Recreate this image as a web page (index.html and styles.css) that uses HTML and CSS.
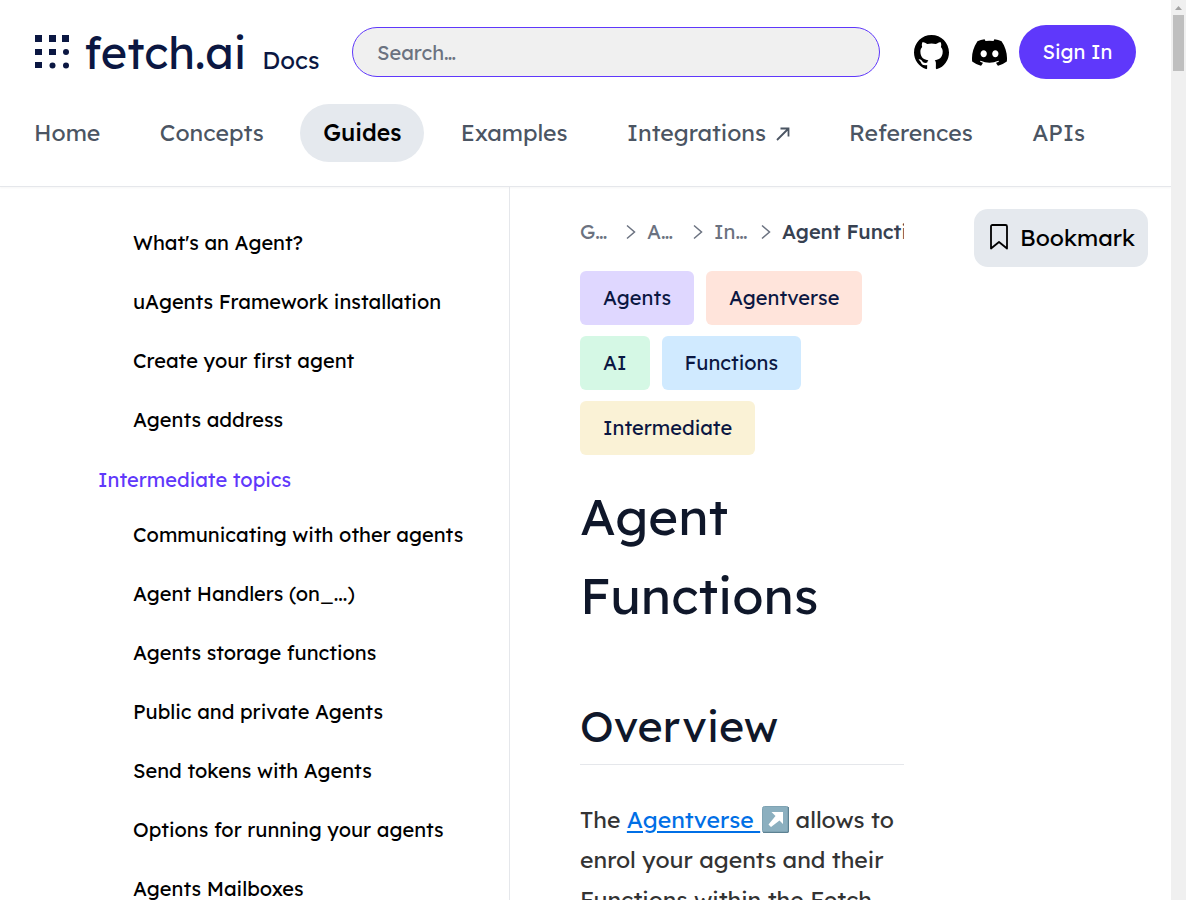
FILE: index.html
```html
<!DOCTYPE html>
<html lang="en">
<head>
<meta charset="utf-8">
<title>Agent Functions – Fetch.ai Docs</title>
<link rel="stylesheet" href="styles.css">
</head>
<body>
<div class="window">
  <div class="page">
    <header class="header">
      <div class="topbar">
        <a class="brand" href="#">
          <svg class="brand-mark" viewBox="0 0 34 34" width="34" height="34" fill="#0b1742" aria-hidden="true">
            <path d="M0 0h7v7H0zM14 0h7v7h-7zM27 0h7v7h-7zM0 14h7v6H0zM14 14h7v6h-7zM0 27h7v6H0z"/>
            <circle cx="31" cy="17" r="3"/><circle cx="17.500" cy="30.500" r="3"/><circle cx="31" cy="30.500" r="3"/>
          </svg>
          <span class="brand-name">fetch.ai</span>
          <span class="brand-sub">Docs</span>
        </a>
        <input class="search" type="search" placeholder="Search…" aria-label="Search">
        <div class="actions">
          <a class="social" href="#" aria-label="GitHub">
            <svg viewBox="0 0 16 16" width="35" height="35"><path d="M8 0C3.580 0 0 3.580 0 8c0 3.540 2.290 6.530 5.470 7.590.4.070.55-.17.55-.38 0-.19-.01-.82-.01-1.490-2.010.37-2.530-.49-2.690-.94-.09-.23-.48-.94-.82-1.130-.28-.15-.68-.52-.01-.53.63-.01 1.080.58 1.230.82.72 1.210 1.870.87 2.330.66.07-.52.28-.87.51-1.070-1.780-.2-3.640-.89-3.640-3.950 0-.87.31-1.590.82-2.150-.08-.2-.36-1.020.08-2.120 0 0 .67-.21 2.200.82.64-.18 1.320-.27 2-.27s1.360.09 2 .27c1.530-1.040 2.200-.82 2.200-.82.44 1.100.16 1.920.08 2.120.51.56.82 1.270.82 2.150 0 3.070-1.870 3.750-3.650 3.950.29.25.54.73.54 1.480 0 1.070-.01 1.930-.01 2.200 0 .21.15.46.55.38A8.010 8.010 0 0 0 16 8c0-4.420-3.580-8-8-8z"/></svg>
          </a>
          <a class="social" href="#" aria-label="Discord">
            <svg viewBox="0 0 24 24" width="35" height="35"><path d="M20.317 4.370a19.800 19.800 0 0 0-4.885-1.515.07.07 0 0 0-.079.037c-.21.375-.444.864-.608 1.250a18.300 18.300 0 0 0-5.487 0 12.600 12.600 0 0 0-.617-1.250.08.08 0 0 0-.079-.037A19.700 19.700 0 0 0 3.677 4.370a.07.07 0 0 0-.032.027C.533 9.046-.32 13.580.099 18.058a.08.08 0 0 0 .031.056 19.900 19.900 0 0 0 5.993 3.030.08.08 0 0 0 .084-.028c.462-.63.874-1.295 1.226-1.994a.076.076 0 0 0-.041-.106 13.100 13.100 0 0 1-1.872-.892.077.077 0 0 1-.008-.128c.126-.094.252-.192.372-.291a.07.07 0 0 1 .077-.01c3.928 1.793 8.180 1.793 12.062 0a.07.07 0 0 1 .078.009c.12.099.246.198.373.292a.077.077 0 0 1-.006.127 12.300 12.300 0 0 1-1.873.892.077.077 0 0 0-.041.107c.36.698.772 1.362 1.225 1.993a.076.076 0 0 0 .084.028 19.800 19.800 0 0 0 6.002-3.030.077.077 0 0 0 .032-.054c.5-5.177-.838-9.674-3.549-13.660a.06.06 0 0 0-.031-.03zM8.020 15.330c-1.183 0-2.157-1.085-2.157-2.419 0-1.333.955-2.419 2.157-2.419 1.210 0 2.176 1.095 2.157 2.420 0 1.333-.955 2.418-2.157 2.418zm7.975 0c-1.183 0-2.157-1.085-2.157-2.419 0-1.333.955-2.419 2.157-2.419 1.210 0 2.176 1.095 2.157 2.420 0 1.333-.946 2.418-2.157 2.418z"/></svg>
          </a>
          <button class="signin" type="button">Sign In</button>
        </div>
      </div>
      <nav class="nav" aria-label="Main">
        <a href="#">Home</a>
        <a href="#">Concepts</a>
        <a class="active" href="#" aria-current="page">Guides</a>
        <a href="#">Examples</a>
        <a href="#">Integrations
          <svg viewBox="0 0 14 14" width="14" height="14" fill="none" stroke="currentColor" stroke-width="1.800" aria-hidden="true"><path d="M1 13 12.500 1.500M4.500 1.500h8v8"/></svg></a>
        <a href="#">References</a>
        <a href="#">APIs</a>
      </nav>
    </header>
    <div class="body">
      <aside class="sidebar">
        <a href="#">What's an Agent?</a>
        <a href="#">uAgents Framework installation</a>
        <a href="#">Create your first agent</a>
        <a href="#">Agents address</a>
        <a class="section" href="#">Intermediate topics</a>
        <a href="#">Communicating with other agents</a>
        <a href="#">Agent Handlers (on_...)</a>
        <a href="#">Agents storage functions</a>
        <a href="#">Public and private Agents</a>
        <a href="#">Send tokens with Agents</a>
        <a href="#">Options for running your agents</a>
        <a href="#">Agents Mailboxes</a>
      </aside>
      <main class="content">
        <div class="crumbs">
          <a href="#">G…</a>
          <svg viewBox="0 0 10 16" width="10" height="16" aria-hidden="true"><path d="M1 1.500 8.500 8 1 14.500"/></svg>
          <a href="#">A…</a>
          <svg viewBox="0 0 10 16" width="10" height="16" aria-hidden="true"><path d="M1 1.500 8.500 8 1 14.500"/></svg>
          <a class="wide" href="#">In…</a>
          <svg viewBox="0 0 10 16" width="10" height="16" aria-hidden="true"><path d="M1 1.500 8.500 8 1 14.500"/></svg>
          <span class="current">Agent Functions</span>
        </div>
        <div class="tags">
          <span class="tag purple">Agents</span>
          <span class="tag red">Agentverse</span>
          <span class="tag green">AI</span>
          <span class="tag blue">Functions</span>
          <span class="tag yellow">Intermediate</span>
        </div>
        <h1>Agent Functions</h1>
        <h2>Overview</h2>
        <p>The <a href="#">Agentverse <svg viewBox="0 0 27 27" width="27" height="27" aria-hidden="true"><rect x=".5" y=".5" width="26" height="26" rx="2" fill="#8bafbf" stroke="#7fa3b3"/><path d="M1 26.300h25.300V1" fill="none" stroke="#54798a"/><path d="M9.500 6H21v12l-3.500-3.500-8.500 6.500-2.500-2.500 7-8.500z" fill="#fff"/></svg></a> allows to enrol your agents and their Functions within the Fetch</p>
      </main>
      <div class="aside">
        <button class="bookmark" type="button">
          <svg viewBox="0 0 18 26" width="18" height="26" fill="none" stroke="#000" stroke-width="1.800" stroke-linejoin="round" aria-hidden="true"><path d="M1 2.500Q1 1 2.500 1h13Q17 1 17 2.500V24.500L9 18 1 24.500z"/></svg>
          Bookmark
        </button>
      </div>
    </div>
  </div>
  <div class="scrollbar" aria-hidden="true">
    <svg viewBox="0 0 15 15" width="15" height="15"><path d="M4 10l3.500-4L11 10z" fill="#a3a3a3"/></svg>
    <div class="thumb"></div>
  </div>
</div>
</body>
</html>
```
FILE: styles.css
```css
* { box-sizing: border-box; }
body {
  margin: 0;
  background: #fff;
  color: #000;
  font-family: Lexend, Inter, "Noto Sans", sans-serif;
  font-size: 20px;
}
a { color: inherit; text-decoration: none; }
button, input { font: inherit; }
.window { display: flex; height: 100vh; overflow: hidden; }
.page { flex: 1; min-width: 0; display: flex; flex-direction: column; }
.header {
  flex: none;
  padding: 25px 35px 24px;
  border-bottom: 1px solid #e5e7eb;
  box-shadow: 0 1px 2px rgba(0, 0, 0, .04);
}
.topbar { display: flex; align-items: center; height: 54px; }
.brand { display: flex; align-items: baseline; width: 317px; color: #0b1742; }
.brand-mark { flex: none; margin-right: 15px; }
.brand-name { font-size: 45px; line-height: 54px; }
.brand-sub { font-size: 24px; margin-left: 16px; }
.search {
  flex: 1;
  min-width: 0;
  height: 50px;
  padding: 0 24px;
  border: 1px solid #5f38fb;
  border-radius: 25px;
  background: #f0f0f0;
  appearance: none;
}
.search::placeholder { color: #6b7280; opacity: 1; }
.actions { display: flex; align-items: center; margin-left: 34px; }
.social { height: 35px; margin-right: 23px; }
.social + .social { margin-right: 12px; }
.signin {
  width: 117px;
  height: 54px;
  padding: 0 0 2px;
  border: 0;
  border-radius: 27px;
  background: #5f38fb;
  color: #fff;
}
.nav { display: flex; justify-content: space-between; margin: 25px 28px 0 -24px; }
.nav a {
  padding: 0 23px;
  border-radius: 29px;
  color: #4b5563;
  font-size: 23px;
  line-height: 58px;
  white-space: nowrap;
}
.nav .active { background: #e5e9ee; color: #000; font-weight: 500; }
.nav svg { margin-left: 3px; }
.body { flex: 1; min-height: 0; display: flex; overflow: hidden; }
.sidebar {
  width: 510px;
  flex: none;
  display: flex;
  flex-direction: column;
  gap: 19px;
  padding: 36px 24px 0 133px;
  border-right: 1px solid #e5e7eb;
}
.sidebar a { flex: none; line-height: 40px; white-space: nowrap; }
.sidebar .section { margin: 1px 0 -4px -35px; color: #5f38fb; }
.content { flex: 1; min-width: 0; padding: 24px 0 0 70px; }
.crumbs { display: flex; align-items: center; line-height: 42px; color: #6b7280; overflow: hidden; white-space: nowrap; }
.crumbs a { width: 28px; flex: none; }
.crumbs .wide { width: 35px; }
.crumbs svg { flex: none; margin: 0 11px 0 18px; fill: none; stroke: #6b7280; stroke-width: 1.500; }
.crumbs .wide + svg { margin-left: 12px; }
.current { color: #374151; font-weight: 500; }
.tags { display: flex; flex-wrap: wrap; gap: 11px 12px; margin-top: 18px; }
.tag { padding: 0 23px; border-radius: 6px; color: #0b1742; line-height: 54px; }
.purple { background: #dfd7ff; }
.red { background: #ffe4db; }
.green { background: #d5f8e5; }
.blue { background: #d0eaff; }
.yellow { background: #faf2d6; }
h1 { margin: 22px 0 0; color: #0f172a; font-size: 51px; font-weight: 400; line-height: 79px; }
h2 {
  margin: 64px 0 0;
  padding-bottom: 11px;
  border-bottom: 1px solid #e5e7eb;
  color: #0f172a;
  font-size: 43px;
  font-weight: 400;
  line-height: 54px;
}
p { margin: 35px 0 0; color: #333; font-size: 23px; line-height: 40px; }
p a { color: #006fe6; text-decoration: underline; text-underline-offset: 3px; }
p svg { margin-left: 2px; vertical-align: -5px; }
.aside { width: 267px; flex: none; padding: 22px 23px 0 70px; }
.bookmark {
  display: flex;
  align-items: center;
  gap: 12px;
  width: 100%;
  height: 58px;
  padding: 0 0 2px 16px;
  border: 0;
  border-radius: 14px;
  background: #e5e9ee;
  color: #000;
  font-size: 23px;
}
.scrollbar { width: 15px; flex: none; background: #f0f0f0; }
.scrollbar svg { display: block; }
.thumb { height: 56px; margin: 0 2px; background: #bfbfbf; }
```
